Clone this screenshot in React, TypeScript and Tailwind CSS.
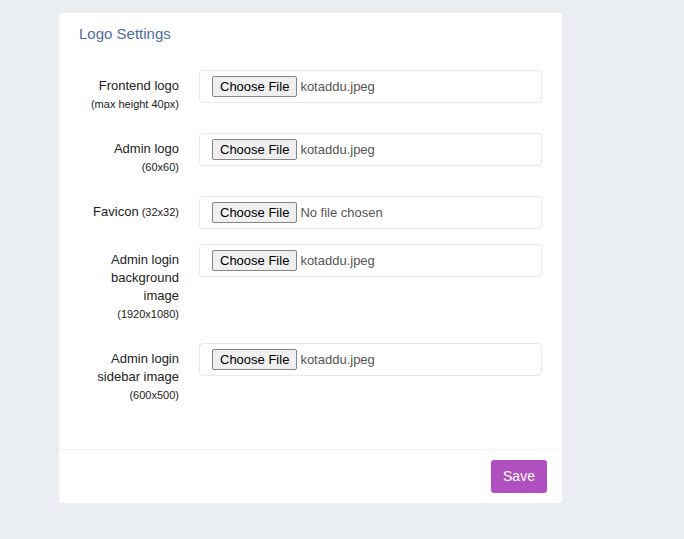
const rows = [
  { label: ["Frontend logo"], hint: "(max height 40px)", file: "kotaddu.jpeg" },
  { label: ["Admin logo"], hint: "(60x60)", file: "kotaddu.jpeg" },
  { label: ["Favicon"], inlineHint: "(32x32)", file: "No file chosen" },
  { label: ["Admin login", "background", "image"], hint: "(1920x1080)", file: "kotaddu.jpeg" },
  { label: ["Admin login", "sidebar image"], hint: "(600x500)", file: "kotaddu.jpeg" },
];

function FileField({ file }: { file: string }) {
  return (
    <div className="flex h-[33px] flex-1 items-center rounded border border-[#e8e8e8] bg-white px-3">
      <span className="flex h-[21px] items-center rounded-[2px] border border-[#858585] bg-[#efefef] px-[7px] text-[13px] text-black">
        Choose File
      </span>
      <span className="ml-[3px] text-[13px] text-[#555]">{file}</span>
    </div>
  );
}

export default function App() {
  return (
    <div
      className="min-h-[539px] bg-[#eaedf2] pt-[13px] pl-[59px]"
      style={{ fontFamily: '"Liberation Sans", Arial, sans-serif' }}
    >
      <div className="w-[503px] rounded-[3px] bg-white">
        <div className="px-5 pt-[12px] pb-[27px]">
          <h2 className="text-[15px] leading-[18px] text-[#4f6c9e]">Logo Settings</h2>
        </div>
        <div className="px-5 pb-[25px]">
          {rows.map((r, i) => (
            <div key={i} className="mb-[15px] flex gap-5">
              <div className="w-[100px] pt-[7px] pb-[5px] text-right text-[13px] leading-[18px] text-[#222]">
                {r.label.map((l, j) => (
                  <div key={j}>
                    {l}
                    {r.inlineHint && <span className="text-[11px]"> {r.inlineHint}</span>}
                  </div>
                ))}
                {r.hint && <div className="text-[11px] leading-[18px]">{r.hint}</div>}
              </div>
              <FileField file={r.file} />
            </div>
          ))}
        </div>
        <div className="flex justify-end border-t border-[#f2f3f5] px-[15px] pt-[10px] pb-[10px]">
          <button className="h-[33px] w-[56px] rounded-[3px] bg-[#b04fbf] text-[14px] text-white">
            Save
          </button>
        </div>
      </div>
    </div>
  );
}
